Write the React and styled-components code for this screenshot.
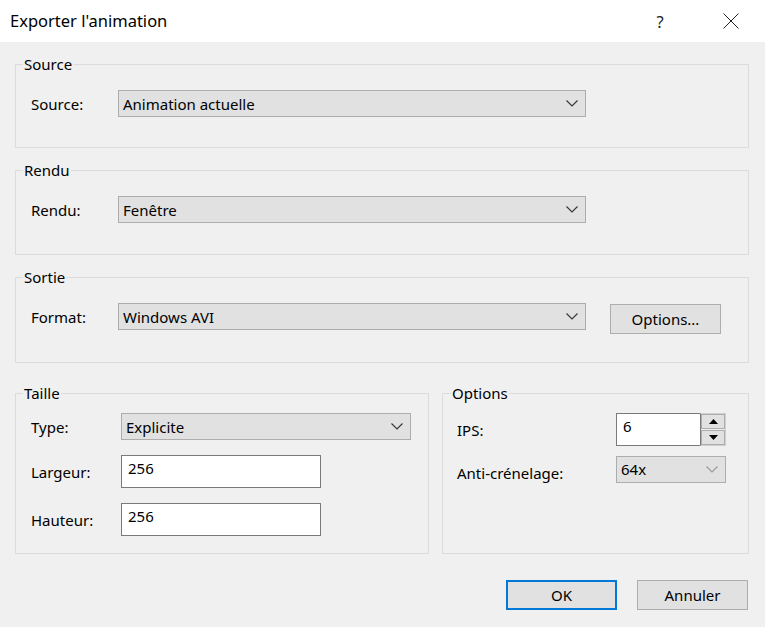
import React from "react";
import styled, { createGlobalStyle } from "styled-components";

const Global = createGlobalStyle`
  html, body { margin: 0; padding: 0; background: #f0f0f0; }
  body { font-family: "Noto Sans", "Segoe UI", Arial, sans-serif; font-size: 15px; color: #000; }
  * { box-sizing: border-box; }
`;

const Window = styled.div`
  width: 765px;
  height: 627px;
  background: #f0f0f0;
  display: flex;
  flex-direction: column;
  overflow: hidden;
`;

const TitleBar = styled.div`
  height: 42px;
  background: #fff;
  display: flex;
  align-items: center;
  padding-left: 10px;
`;

const Title = styled.div`
  flex: 1;
  font-size: 16.5px;
  line-height: 20px;
  margin-top: -1px;
`;

const TitleIcons = styled.div`
  display: flex;
  align-items: center;
  gap: 25px;
  padding-right: 11px;
`;

const TitleBtn = styled.div`
  width: 46px;
  height: 42px;
  display: flex;
  align-items: center;
  justify-content: center;
  font-size: 16.5px;
  color: #222;
`;

const Body = styled.div`
  padding: 12px 16px 0 15px;
  display: flex;
  flex-direction: column;
`;

const Group = styled.fieldset`
  margin: 0 0 ${p => p.$mb || 0}px 0;
  border: 1px solid #dcdcdc;
  padding: ${p => p.$pt}px ${p => p.$px}px ${p => p.$pb}px;
  min-width: 0;
  display: flex;
  flex-direction: column;
  gap: ${p => p.$gap || 0}px;
`;

const Legend = styled.legend`
  padding: 0 1px;
  margin-left: ${p => p.$ml}px;
  font-size: 15px;
  line-height: 20px;
`;

const Row = styled.div`
  display: flex;
  align-items: ${p => p.$align || "center"};
`;

const Label = styled.div`
  width: ${p => p.$w}px;
  flex: none;
  line-height: 20px;
  margin-top: ${p => p.$mt || 0}px;
`;

const Combo = styled.div`
  width: ${p => p.$w}px;
  height: 27px;
  background: #e1e1e1;
  border: 1px solid #adadad;
  display: flex;
  align-items: center;
  justify-content: space-between;
  padding: 0 7px 0 4px;
  line-height: 20px;
  flex: none;
`;

const Chevron = ({ color = "#333" }) => (
  <svg width="12" height="7" viewBox="0 0 12 7">
    <path d="M0.5 0.5 L6 6 L11.5 0.5" fill="none" stroke={color} strokeWidth="1.1" />
  </svg>
);

const TextBox = styled.div`
  width: ${p => p.$w}px;
  height: 33px;
  background: #fff;
  border: 1px solid #7a7a7a;
  padding: 2px 6px 0;
  line-height: 20px;
  flex: none;
`;

const Spin = styled.div`
  display: flex;
  width: 110px;
  height: 33px;
  flex: none;
`;

const SpinField = styled(TextBox)`
  width: 84px;
  border-right: none;
`;

const SpinButtons = styled.div`
  width: 26px;
  height: 33px;
  border: 1px solid #cfcfcf;
  border-left: 1px solid #7a7a7a;
  display: flex;
  flex-direction: column;
  gap: 1px;
  background: #f0f0f0;
`;

const SpinBtn = styled.div`
  flex: 1;
  background: #e1e1e1;
  border: 1px solid #adadad;
  display: flex;
  align-items: center;
  justify-content: center;
`;

const Button = styled.div`
  width: 111px;
  height: 30px;
  background: #e1e1e1;
  border: ${p => (p.$default ? "2px solid #0078d7" : "1px solid #adadad")};
  display: flex;
  align-items: center;
  justify-content: center;
  line-height: 20px;
  flex: none;
  margin-top: ${p => p.$mt || 0}px;
  margin-left: ${p => p.$ml || 0}px;
`;

const Columns = styled.div`
  display: grid;
  grid-template-columns: 414px 307px;
  column-gap: 13px;
  margin-top: 20px;
`;

const Footer = styled.div`
  display: flex;
  justify-content: flex-end;
  gap: 20px;
  margin-top: 26px;
  padding-right: 1px;
`;

export default function App() {
  return (
    <>
      <Global />
      <Window>
        <TitleBar>
          <Title>Exporter l'animation</Title>
          <TitleIcons>
            <TitleBtn>?</TitleBtn>
            <TitleBtn>
              <svg width="16" height="16" viewBox="0 0 16 16">
                <path d="M0.5 0.5 L15.5 15.5 M15.5 0.5 L0.5 15.5" stroke="#222" strokeWidth="1" fill="none" />
              </svg>
            </TitleBtn>
          </TitleIcons>
        </TitleBar>
        <Body>
          <Group $pt={16} $px={15} $pb={30} $mb={12}>
            <Legend $ml={-8}>Source</Legend>
            <Row>
              <Label $w={87}>Source:</Label>
              <Combo $w={468}>
                <span>Animation actuelle</span>
                <Chevron />
              </Combo>
            </Row>
          </Group>
          <Group $pt={16} $px={15} $pb={31} $mb={12}>
            <Legend $ml={-8}>Rendu</Legend>
            <Row>
              <Label $w={87}>Rendu:</Label>
              <Combo $w={468}>
                <span>Fenêtre</span>
                <Chevron />
              </Combo>
            </Row>
          </Group>
          <Group $pt={16} $px={15} $pb={28}>
            <Legend $ml={-8}>Sortie</Legend>
            <Row $align="flex-start">
              <Label $w={87} $mt={4}>Format:</Label>
              <Combo $w={468}>
                <span>Windows AVI</span>
                <Chevron />
              </Combo>
              <Button $mt={1} $ml={24}>Options...</Button>
            </Row>
          </Group>
          <Columns>
            <Group $pt={10} $px={15} $pb={17} $gap={15}>
              <Legend $ml={-8}>Taille</Legend>
              <Row>
                <Label $w={90}>Type:</Label>
                <Combo $w={290}>
                  <span>Explicite</span>
                  <Chevron />
                </Combo>
              </Row>
              <Row>
                <Label $w={90}>Largeur:</Label>
                <TextBox $w={200}>256</TextBox>
              </Row>
              <Row>
                <Label $w={90}>Hauteur:</Label>
                <TextBox $w={200}>256</TextBox>
              </Row>
            </Group>
            <Group $pt={10} $px={14} $pb={17} $gap={9}>
              <Legend $ml={-6}>Options</Legend>
              <Row>
                <Label $w={159}>IPS:</Label>
                <Spin>
                  <SpinField>6</SpinField>
                  <SpinButtons>
                    <SpinBtn>
                      <svg width="9" height="5" viewBox="0 0 9 5"><path d="M4.5 0 L9 5 L0 5 Z" fill="#000" /></svg>
                    </SpinBtn>
                    <SpinBtn>
                      <svg width="9" height="5" viewBox="0 0 9 5"><path d="M0 0 L9 0 L4.5 5 Z" fill="#000" /></svg>
                    </SpinBtn>
                  </SpinButtons>
                </Spin>
              </Row>
              <Row>
                <Label $w={159} $mt={8}>Anti-crénelage:</Label>
                <Combo $w={110}>
                  <span>64x</span>
                  <Chevron color="#999" />
                </Combo>
              </Row>
            </Group>
          </Columns>
          <Footer>
            <Button $default>OK</Button>
            <Button>Annuler</Button>
          </Footer>
        </Body>
      </Window>
    </>
  );
}
